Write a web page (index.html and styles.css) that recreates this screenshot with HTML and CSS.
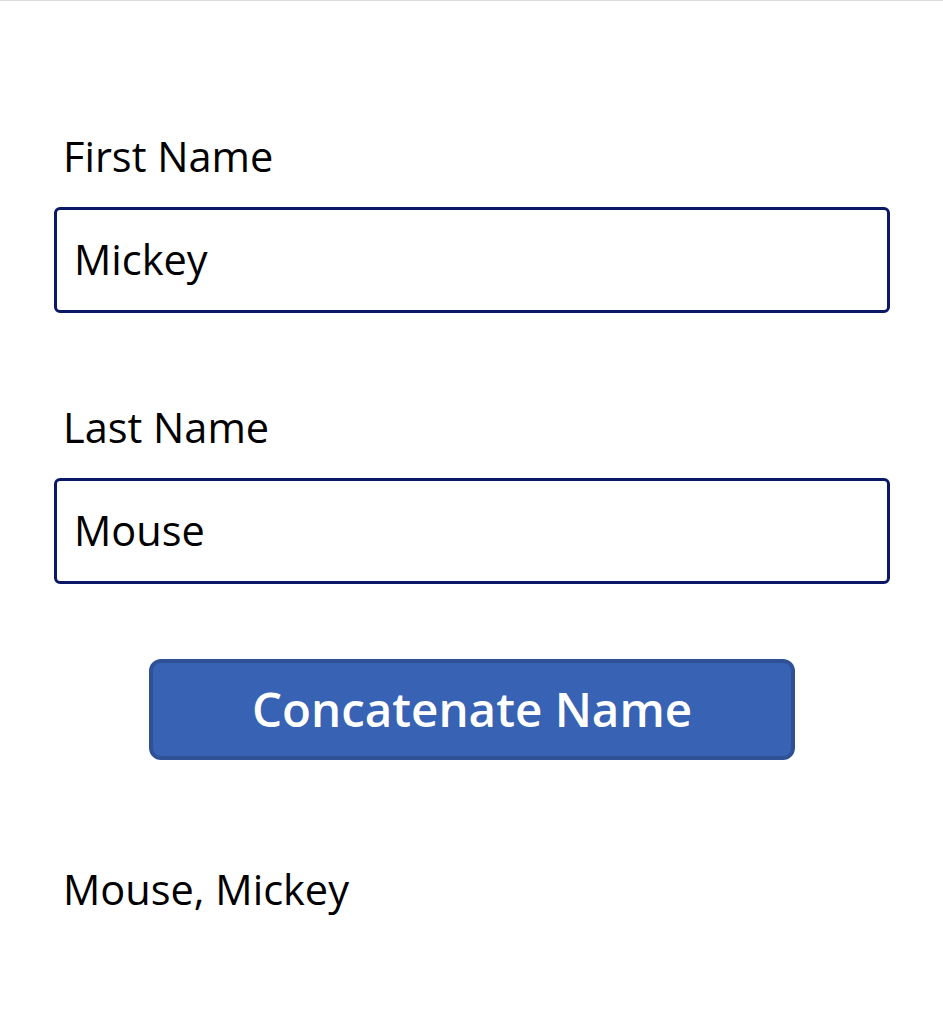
FILE: index.html
```html
<!DOCTYPE html>
<html>
<head>
<meta charset="utf-8">
<link rel="stylesheet" href="styles.css">
</head>
<body>
<div class="screen">
  <div class="field">
    <div class="label">First Name</div>
    <div class="input">Mickey</div>
  </div>
  <div class="field field-2">
    <div class="label">Last Name</div>
    <div class="input">Mouse</div>
  </div>
  <div class="btn-row">
    <div class="btn">Concatenate Name</div>
  </div>
  <div class="result">Mouse, Mickey</div>
</div>
</body>
</html>
```
FILE: styles.css
```css
html, body {
  margin: 0;
  padding: 0;
  background: #fff;
}
body {
  font-family: "Open Sans", "Noto Sans", sans-serif;
  color: #000;
}
.screen {
  width: 943px;
  height: 1029px;
  border-top: 1px solid #dadada;
  box-sizing: border-box;
  padding: 127px 0 0 54px;
}
.field {
  width: 836px;
}
.field-2 {
  margin-top: 86px;
}
.label {
  font-size: 41.5px;
  line-height: 56px;
  height: 56px;
  padding-left: 9px;
}
.input {
  margin-top: 23px;
  height: 106px;
  box-sizing: border-box;
  border: 3px solid #0b1868;
  border-radius: 6px;
  font-size: 41.5px;
  line-height: 97px;
  padding: 1px 0 0 17px;
}
.btn-row {
  margin-top: 75px;
  padding-left: 95px;
}
.btn {
  width: 646px;
  height: 101px;
  box-sizing: border-box;
  background: #3862b3;
  border: 4px solid #2f5296;
  border-radius: 12px;
  color: #fff;
  font-weight: 600;
  font-size: 47.5px;
  line-height: 91px;
  text-align: center;
}
.result {
  margin-top: 101px;
  padding-left: 9px;
  font-size: 41.5px;
  line-height: 56px;
}
```
